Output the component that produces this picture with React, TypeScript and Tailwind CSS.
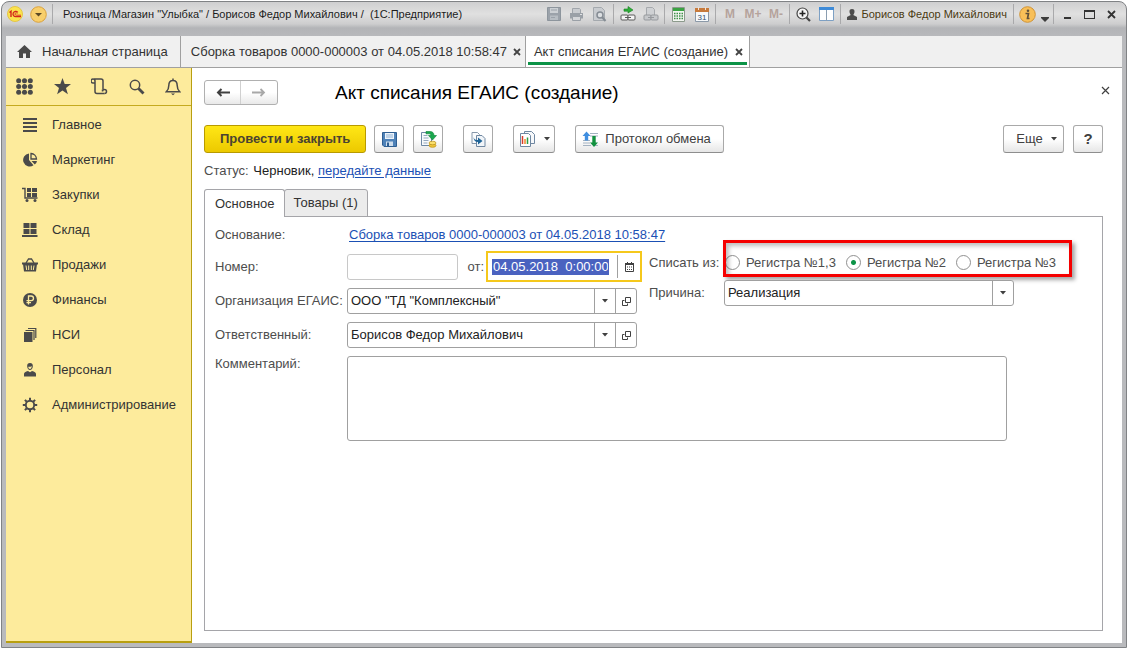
import { useState } from "react"
import type { ReactNode } from "react"
import clsx from "clsx"

const INK = "#4a4a4a"

/* ---------- small shared pieces ---------- */

function Caret({ className }: { className?: string }) {
  return (
    <svg width="6" height="4" viewBox="0 0 6 4" className={className} aria-hidden="true">
      <path d="M0 0h6L3 3.5z" fill="#404040" />
    </svg>
  )
}

function Sep() {
  return <span className="mx-[2px] h-5 w-px shrink-0 bg-[#a9a9ab]" />
}

function BarButton({ label, children }: { label: string; children: ReactNode }) {
  return (
    <button type="button" aria-label={label} className="flex h-6 w-[23px] shrink-0 items-center justify-center">
      {children}
    </button>
  )
}

const toolButton =
  "flex h-7 items-center justify-center rounded-[3px] border border-[#a9a9a9] border-b-[#8e8e8e] bg-linear-to-b from-white from-50% to-[#e6e6e6] text-[#404040]"

/* ---------- title bar ---------- */

function PrinterIcon() {
  return (
    <svg width="15" height="15" viewBox="0 0 15 15" aria-hidden="true">
      <path d="M3.500 1.500h7l1 1v4h-8z" fill="#c9ccd0" stroke="#a0a5ab" />
      <path d="M1 6h13v5.500H1z" fill="#9aa0a7" />
      <path d="M3.500 9.500h8v4h-8z" fill="#d4d6d9" stroke="#9aa0a7" />
      <path d="M11 7.500h2" stroke="#dfe1e3" />
    </svg>
  )
}

function TitleBar() {
  return (
    <header className="flex h-[34px] items-start text-[11px] text-[#1c1c1c]">
      <div className="flex h-6 min-w-0 flex-1 items-center">
        <svg width="16" height="16" viewBox="0 0 16 16" className="ml-px shrink-0" aria-hidden="true">
          <circle cx="8" cy="8" r="7.500" fill="#fbe34d" stroke="#e3c548" />
          <path d="M2.500 6.500l1.500-1.300v5.800" fill="none" stroke="#d3261c" strokeWidth="1.400" />
          <path d="M10.800 6.300a2.700 2.700 0 1 0-1.800 4.400h5" fill="none" stroke="#d3261c" strokeWidth="1.300" />
          <path d="M10.300 7.500a1.200 1.200 0 1 0-1 1.700h4.700" fill="none" stroke="#d3261c" strokeWidth="0.900" />
        </svg>
        <button type="button" aria-label="Главное меню" className="ml-[7px] shrink-0">
          <svg width="17" height="17" viewBox="0 0 17 17" aria-hidden="true">
            <circle cx="8.500" cy="8.500" r="7.800" fill="#f8cf6c" stroke="#d9a13d" />
            <path d="M5 7h7l-3.500 3.500z" fill="#5d4a25" />
          </svg>
        </button>
        <span className="mx-[5px] h-5 w-px shrink-0 bg-[#a9a9ab]" />
        <span className="ml-[5px] truncate whitespace-pre">
          Розница /Магазин "Улыбка" / Борисов Федор Михайлович /  (1С:Предприятие)
        </span>
      </div>

      <div className="flex h-6 shrink-0 items-center">
        <BarButton label="Сохранить">
          <svg width="14" height="14" viewBox="0 0 14 14" aria-hidden="true">
            <path d="M.5.5h13v13H.5z" fill="#9ba2aa" stroke="#8d959d" />
            <path d="M3 1h8v5H3z" fill="#ccd0d4" />
            <path d="M3 8.500h8V13H3z" fill="#b7bdc3" />
            <path d="M4 3h6M4 10.500h4" stroke="#9ba2aa" />
          </svg>
        </BarButton>
        <BarButton label="Печать">
          <PrinterIcon />
        </BarButton>
        <BarButton label="Предварительный просмотр">
          <svg width="15" height="15" viewBox="0 0 15 15" aria-hidden="true">
            <path d="M1.500.5h8l3 3v10h-11z" fill="#c9ccd0" stroke="#a4a9ae" />
            <circle cx="8" cy="8" r="3" fill="#dcdfe2" stroke="#858c94" strokeWidth="1.500" />
            <path d="M10 10l3.500 4" stroke="#858c94" strokeWidth="2" />
          </svg>
        </BarButton>
        <Sep />
        <BarButton label="Получить ссылку">
          <svg width="16" height="16" viewBox="0 0 16 16" aria-hidden="true">
            <path d="M4 3h4V.5L13 4 8 7V5.200H4z" fill="#2fae3b" stroke="#16801f" strokeWidth="0.600" />
            <rect x="1" y="9" width="7" height="5" rx="1" fill="#f4f4f4" stroke="#5a5a5a" />
            <rect x="8" y="9" width="7" height="5" rx="1" fill="#f4f4f4" stroke="#5a5a5a" />
            <path d="M5 11.500h6" stroke="#5a5a5a" />
          </svg>
        </BarButton>
        <BarButton label="Перейти по ссылке">
          <svg width="16" height="15" viewBox="0 0 16 15" aria-hidden="true">
            <path d="M3.500.5h6l2 2v6h-8z" fill="#cfd1d4" stroke="#a6a9ad" />
            <rect x="1" y="8" width="7" height="5" rx="1" fill="#c6c8cb" stroke="#96999d" />
            <rect x="8" y="8" width="7" height="5" rx="1" fill="#c6c8cb" stroke="#96999d" />
            <path d="M5 10.500h6" stroke="#96999d" />
          </svg>
        </BarButton>
        <Sep />
        <BarButton label="Калькулятор">
          <svg width="13" height="15" viewBox="0 0 13 15" aria-hidden="true">
            <path d="M.5.5h12v14H.5z" fill="#f3f6f1" stroke="#8c9a8c" />
            <path d="M1 1h11v3H1z" fill="#3aa342" />
            <path d="M2 6.500h9M2 9h9M2 11.500h9" stroke="#3f8f48" strokeWidth="1.500" strokeDasharray="1.500 1" />
          </svg>
        </BarButton>
        <BarButton label="Календарь">
          <svg width="14" height="15" viewBox="0 0 14 15" aria-hidden="true">
            <path d="M.5 1.500h13v13H.5z" fill="#f7f9fb" stroke="#8b99a8" />
            <path d="M0 1h14v4H0z" fill="#c77a3c" />
            <path d="M3.500 0v3M10.500 0v3" stroke="#f1e3d6" />
            <text x="7" y="12.500" textAnchor="middle" fontSize="8" fill="#34506e">31</text>
          </svg>
        </BarButton>
        <Sep />
        <button type="button" className="h-6 w-[23px] text-xs font-bold text-[#b5a39c]">M</button>
        <button type="button" className="h-6 w-[23px] text-xs font-bold text-[#b5a39c]">M+</button>
        <button type="button" className="h-6 w-[23px] text-xs font-bold text-[#b5a39c]">M-</button>
        <Sep />
        <BarButton label="Масштаб">
          <svg width="15" height="15" viewBox="0 0 15 15" aria-hidden="true">
            <circle cx="6.500" cy="6.500" r="5.500" fill="#f5f5f5" stroke="#454545" strokeWidth="1.200" />
            <path d="M3.500 6.500h6M6.500 3.500v6" stroke="#222" strokeWidth="1.600" />
            <path d="M10.500 10.500l3.500 3.500" stroke="#454545" strokeWidth="2.200" />
          </svg>
        </BarButton>
        <BarButton label="Панели">
          <svg width="15" height="14" viewBox="0 0 15 14" aria-hidden="true">
            <path d="M.5.5h14v13H.5z" fill="#fff" stroke="#7da0c4" />
            <path d="M0 0h15v3H0z" fill="#3f8bd8" />
            <path d="M7.500 3v11" stroke="#8a9db0" />
          </svg>
        </BarButton>
        <Sep />
        <button type="button" className="flex h-6 items-center gap-1 px-1 text-[#4a3a12]">
          <svg width="10" height="11" viewBox="0 0 10 11" aria-hidden="true">
            <path d="M5 0c2 0 2.700 1.300 2.500 3C7.300 4.500 6.600 5.200 6.300 6L10 8v3H0V8l3.700-2C3.400 5.200 2.700 4.500 2.500 3 2.300 1.300 3 0 5 0z" fill="#4d4d4d" />
          </svg>
          Борисов Федор Михайлович
        </button>
        <Sep />
        <BarButton label="О программе">
          <svg width="17" height="17" viewBox="0 0 17 17" aria-hidden="true">
            <circle cx="8.500" cy="8.500" r="7.800" fill="#f8bf58" stroke="#cf9336" />
            <circle cx="9" cy="4.700" r="1.300" fill="#5f503a" />
            <path d="M6.500 7.500h3l-1 5h2" fill="none" stroke="#5f503a" strokeWidth="1.700" />
          </svg>
        </BarButton>
        <button type="button" aria-label="Сервис" className="flex h-6 w-3 items-end justify-center pb-1">
          <svg width="8" height="5" viewBox="0 0 8 5" aria-hidden="true">
            <path d="M0 0h8v1L4 5 0 1z" fill="#3d3d3d" />
          </svg>
        </button>
        <Sep />
        <button type="button" aria-label="Свернуть" className="flex h-6 w-[22px] items-end justify-center pb-[7px]">
          <span className="h-[2px] w-[7px] bg-[#333]" />
        </button>
        <button type="button" aria-label="Развернуть" className="flex h-6 w-[22px] items-center justify-center">
          <span className="h-[9px] w-[11px] border border-t-2 border-[#333]" />
        </button>
        <button type="button" aria-label="Закрыть" className="flex h-6 w-[22px] items-center justify-center">
          <svg width="9" height="9" viewBox="0 0 9 9" aria-hidden="true">
            <path d="M1 1l7 7M8 1L1 8" stroke="#333" strokeWidth="1.800" />
          </svg>
        </button>
      </div>
    </header>
  )
}

/* ---------- open windows ---------- */

function CloseMark() {
  return (
    <svg width="8" height="8" viewBox="0 0 8 8" aria-hidden="true">
      <path d="M1 1l6 6M7 1L1 7" stroke="#444" strokeWidth="1.800" />
    </svg>
  )
}

function WindowTabs() {
  return (
    <nav className="flex h-8 border-b border-[#a0a0a0] bg-[#f0f0f0] text-[13px] text-[#333]">
      <button type="button" className="flex items-center gap-[10px] border-r border-[#a0a0a0] pr-3 pl-[11px]">
        <svg width="15" height="13" viewBox="0 0 15 13" aria-hidden="true">
          <path d="M7.500 0L15 7h-2v6H9V8.500H6V13H2V7H0z" fill={INK} />
        </svg>
        Начальная страница
      </button>
      <div className="flex items-center gap-[6px] border-r border-[#a0a0a0] pr-1 pl-[10px]">
        <button type="button">Сборка товаров 0000-000003 от 04.05.2018 10:58:47</button>
        <button type="button" aria-label="Закрыть вкладку"><CloseMark /></button>
      </div>
      <div className="flex border-r border-[#a0a0a0] bg-white px-[2px] pb-[2px]">
        <div className="flex items-center gap-[7px] border-b-3 border-[#0c9347] px-1 pt-[5px] pl-[6px]">
          <button type="button">Акт списания ЕГАИС (создание)</button>
          <button type="button" aria-label="Закрыть вкладку"><CloseMark /></button>
        </div>
      </div>
    </nav>
  )
}

/* ---------- sidebar ---------- */

const SECTIONS: { title: string; icon: ReactNode }[] = [
  { title: "Главное", icon: <path d="M1 2h14M1 6h14M1 10h14M1 14h14" stroke={INK} strokeWidth="2" /> },
  {
    title: "Маркетинг",
    icon: (
      <>
        <path d="M7 1.500V8l4.500 5.200A6.500 6.500 0 1 1 7 1.500z" fill={INK} />
        <path d="M9 1.500V7h5.500A5.800 5.800 0 0 0 9 1.500z" fill="none" stroke={INK} strokeWidth="1.300" />
        <path d="M9.500 9H15a6 6 0 0 1-2.200 3.500z" fill={INK} />
      </>
    ),
  },
  {
    title: "Закупки",
    icon: (
      <>
        <path d="M0 1.500h3v9.500h12.500" fill="none" stroke={INK} strokeWidth="1.400" />
        <path d="M5 1h4v4H5zM10 1h5v4h-5zM5 6h4v4H5zM10 6h5v4h-5z" fill={INK} />
        <circle cx="5" cy="13.500" r="1.500" fill={INK} />
        <circle cx="13" cy="13.500" r="1.500" fill={INK} />
      </>
    ),
  },
  {
    title: "Склад",
    icon: <path d="M1.500 1h6v5h-6zM8.500 1h6v5h-6zM1.500 7h6v5h-6zM8.500 7h6v5h-6zM0 13h15.500v2H0z" fill={INK} />,
  },
  {
    title: "Продажи",
    icon: (
      <>
        <path d="M4 6l2.500-4h3L12 6" fill="none" stroke={INK} strokeWidth="1.300" />
        <path d="M0 5.500h16v2H0zM1 7h14l-1 7.500H2z" fill={INK} />
        <path d="M4 8.500l.7 4.500M6.700 8.500V13M9.300 8.500V13M12 8.500l-.7 4.500" stroke="#fdeb9c" />
      </>
    ),
  },
  {
    title: "Финансы",
    icon: (
      <>
        <circle cx="8" cy="8" r="7" fill={INK} />
        <path d="M6.500 12.500V4h2.700a2.300 2.300 0 0 1 0 4.600H4.500M4.500 10.700H9" fill="none" stroke="#fdeb9c" strokeWidth="1.300" />
      </>
    ),
  },
  {
    title: "НСИ",
    icon: (
      <>
        <path d="M2 5h8.500v10H2z" fill={INK} />
        <path d="M3.500 3.500H12V13M6 1.500h7.800V11" fill="none" stroke={INK} strokeWidth="1.200" />
      </>
    ),
  },
  {
    title: "Персонал",
    icon: (
      <>
        <path d="M8 1c2.300 0 3 1.500 2.800 3.500C10.600 6.500 9.500 8 8 8S5.400 6.500 5.200 4.500C5 2.500 5.700 1 8 1z" fill={INK} />
        <path d="M2 14.500V12c0-1.500 1.500-2.500 4-3l2 1.300L10 9c2.500.5 4 1.500 4 3v2.500z" fill={INK} />
        <path d="M6.300 4.700c1.200.3 2.400.2 3.400-.7 0 1.700-.6 3-1.700 3s-1.700-1-1.700-2.300z" fill="#fdeb9c" />
      </>
    ),
  },
  {
    title: "Администрирование",
    icon: (
      <>
        <circle cx="8" cy="8" r="4.200" fill="none" stroke={INK} strokeWidth="1.900" />
        <path
          d="M8 .8v2.700M8 12.500v2.700M.8 8h2.700M12.500 8h2.700M2.900 2.900l1.900 1.900M11.200 11.200l1.900 1.900M13.100 2.900l-1.900 1.900M4.800 11.200l-1.900 1.900"
          stroke={INK}
          strokeWidth="2"
        />
      </>
    ),
  },
]

function Sidebar() {
  return (
    <aside className="flex w-[186px] shrink-0 flex-col border-r border-b-2 border-[#b89f10] bg-[#fdeb9c]">
      <div className="flex h-[38px] items-center justify-between border-b border-[#c5aa20] pr-[10px] pl-[10px]">
        <button type="button" aria-label="Меню функций">
          <svg width="17" height="17" viewBox="0 0 19 19" fill={INK} aria-hidden="true">
            {[3, 9.5, 16].map((cy) =>
              [3, 9.5, 16].map((cx) => <circle key={`${cx}-${cy}`} cx={cx} cy={cy} r="2.800" />)
            )}
          </svg>
        </button>
        <button type="button" aria-label="Избранное">
          <svg width="17" height="17" viewBox="0 0 17 17" aria-hidden="true">
            <path d="M8.500 0l2.200 6H17l-5 3.900 1.900 6.300-5.400-3.800-5.400 3.800L5 9.900 0 6h6.300z" fill={INK} />
          </svg>
        </button>
        <button type="button" aria-label="История">
          <svg width="17" height="17" viewBox="0 0 17 17" fill="none" stroke={INK} strokeWidth="1.500" aria-hidden="true">
            <path d="M4 5V3a2 2 0 1 0-2 2h2zM3 1h7a2 2 0 0 1 2 2v8.500M4 5v8.500a2 2 0 0 0 2 2h7.500" />
            <path d="M13.500 15.500a2 2 0 1 0-2-2v-2" />
          </svg>
        </button>
        <button type="button" aria-label="Поиск">
          <svg width="16" height="16" viewBox="0 0 16 16" aria-hidden="true">
            <circle cx="6" cy="6" r="4.700" fill="none" stroke={INK} strokeWidth="1.500" />
            <path d="M9.500 9.500l5 5" stroke={INK} strokeWidth="2.800" />
          </svg>
        </button>
        <button type="button" aria-label="Уведомления">
          <svg width="16" height="18" viewBox="0 0 16 18" fill="none" stroke={INK} strokeWidth="1.500" aria-hidden="true">
            <path d="M8 2.500c3 0 4.200 2.200 4.200 5 0 3.300.6 4.600 2.500 6.300H1.300c1.900-1.700 2.500-3 2.500-6.300 0-2.800 1.200-5 4.200-5zM8 .5v2" />
            <path d="M6 15.500h4L8 17.300z" fill={INK} stroke="none" />
          </svg>
        </button>
      </div>
      <ul className="pt-px text-[13px] text-[#333]">
        {SECTIONS.map((s) => (
          <li key={s.title}>
            <button type="button" className="flex h-[35px] w-full items-center gap-[14px] pl-4">
              <svg width="16" height="16" viewBox="0 0 16 16" aria-hidden="true">{s.icon}</svg>
              {s.title}
            </button>
          </li>
        ))}
      </ul>
    </aside>
  )
}

/* ---------- command bar ---------- */

function CommandBar() {
  return (
    <div className="flex items-center">
      <button
        type="button"
        className="h-7 rounded-[3px] border border-[#b89a00] bg-linear-to-b from-[#ffe715] to-[#ecc900] px-[15px] text-[13px] font-bold text-[#4a4331]"
      >
        Провести и закрыть
      </button>
      <button type="button" aria-label="Записать" className={clsx(toolButton, "ml-2 w-[30px]")}>
        <svg width="15" height="15" viewBox="0 0 15 15" aria-hidden="true">
          <path d="M.5.5h14v14H2l-1.500-1.500z" fill="#4f82b8" stroke="#2f5f92" />
          <path d="M3 1h9v6H3z" fill="#eef4fa" />
          <path d="M4 3h7M4 5h7" stroke="#8fb2d6" />
          <path d="M4 9.500h7V14H4z" fill="#cfdeed" />
          <path d="M5 10.500h2V14H5z" fill="#2f5f92" />
        </svg>
      </button>
      <button type="button" aria-label="Провести" className={clsx(toolButton, "ml-[9px] w-[30px]")}>
        <svg width="17" height="17" viewBox="0 0 17 17" aria-hidden="true">
          <path d="M1.500 1.500h10v13h-10z" fill="#f8fafc" stroke="#6d88a5" />
          <path d="M3.500 4.500h4M3.500 7h5M3.500 9.500h5M3.500 12h4" stroke="#93a8bf" />
          <path d="M6 .5h4c2.500 0 4 1.300 4 4h2.500l-4 4.500-4-4.500H11C11 3.400 10 2.800 8.500 2.800H6z" fill="#19a84e" stroke="#0d7f38" strokeWidth="0.600" />
          <ellipse cx="12.500" cy="14.500" rx="3.500" ry="1.800" fill="#f0c63a" stroke="#b98d12" strokeWidth="0.700" />
          <ellipse cx="12.500" cy="12" rx="3.500" ry="1.800" fill="#fadf6e" stroke="#b98d12" strokeWidth="0.700" />
        </svg>
      </button>
      <button type="button" aria-label="Создать на основании" className={clsx(toolButton, "ml-5 w-[30px]")}>
        <svg width="15" height="15" viewBox="0 0 15 15" aria-hidden="true">
          <path d="M1 .5h5.500l2 2v9H1z" fill="#fbfcfd" stroke="#8798ab" />
          <path d="M5.500 3.500h5.500l3 3v8H5.500z" fill="#f1f5f9" stroke="#6f87a1" />
          <path d="M2.500 5c.5 2.500 2 3 4.500 3V5.500L11.500 9 7 12.500V10C4 10 2.500 8 2.500 5z" fill="#1f6497" />
        </svg>
      </button>
      <button type="button" aria-label="Отчеты" className={clsx(toolButton, "ml-5 w-[42px] gap-2")}>
        <svg width="17" height="16" viewBox="0 0 17 16" aria-hidden="true">
          <path d="M5.500.5h7l3 3v9h-10z" fill="#f7f9fb" stroke="#6f87a1" />
          <path d="M1.500 2.500h8l2 2v11h-10z" fill="#fff" stroke="#6f87a1" />
          <path d="M3.500 5v8" stroke="#d93d2c" strokeWidth="1.500" />
          <path d="M6 8v5" stroke="#f0892a" strokeWidth="1.500" />
          <path d="M8.500 6.500V13" stroke="#2b9d42" strokeWidth="1.500" />
        </svg>
        <Caret />
      </button>
      <button type="button" className={clsx(toolButton, "ml-5 gap-[6px] pr-3 pl-[6px] text-[13px]")}>
        <svg width="17" height="17" viewBox="0 0 17 17" aria-hidden="true">
          <path d="M8 2.500h8M8 5h8M1 9.500h7M1 12h7M1 14.500h8M13 14.500h3" stroke="#a4b2c1" />
          <path d="M4.500.5l4 4.500H6.200v4.500H2.800V5H.5z" fill="#3f8ee0" />
          <path d="M12 16l-4-4.500h2.300V5h3.400v6.500H16z" fill="#12913f" />
        </svg>
        Протокол обмена
      </button>
      <button type="button" className={clsx(toolButton, "ml-auto w-[61px] gap-[8px] pl-[6px] text-[13px]")}>
        Еще
        <Caret />
      </button>
      <button type="button" aria-label="Справка" className={clsx(toolButton, "ml-[9px] w-[30px] text-[15px] font-bold")}>
        ?
      </button>
    </div>
  )
}

/* ---------- form ---------- */

function LookupField({ id, label, value }: { id: string; label: string; value: string }) {
  const [text, setText] = useState(value)
  return (
    <div className="mt-2 flex h-[26px] items-center first:mt-0">
      <label htmlFor={id} className="w-[132px] shrink-0 whitespace-nowrap">{label}</label>
      <div className="flex h-full w-[290px] rounded-[3px] border border-[#a0a0a0] bg-white">
        <input
          id={id}
          type="text"
          value={text}
          onChange={(e) => setText(e.target.value)}
          className="min-w-0 flex-1 px-[3px] text-[#222] outline-none"
        />
        <button type="button" aria-label="Выбрать" className="flex w-[21px] items-center justify-center border-l border-[#a0a0a0]">
          <Caret />
        </button>
        <button type="button" aria-label="Открыть" className="flex w-[21px] items-center justify-center border-l border-[#a0a0a0]">
          <svg width="9" height="9" viewBox="0 0 9 9" fill="none" stroke="#404040" aria-hidden="true">
            <path d="M3.500.5h5v5h-5z" />
            <path d="M2.500 3.500h-2v5h5v-2" />
          </svg>
        </button>
      </div>
    </div>
  )
}

const REGISTERS = ["Регистра №1,3", "Регистра №2", "Регистра №3"]

function FormPanel() {
  const [date, setDate] = useState("04.05.2018  0:00:00")
  const [register, setRegister] = useState(REGISTERS[1])
  const [comment, setComment] = useState("")

  return (
    <div className="flex-1 border border-[#a5a5a9] bg-white pt-2 pl-[10px] text-[13px] text-[#4d4d4d]">
      <div className="flex gap-[7px]">
        <div className="w-[427px] shrink-0">
          <div className="flex h-5 items-center whitespace-nowrap">
            <span className="w-[134px] shrink-0">Основание:</span>
            <a href="#basis" className="text-[#1b50b4] underline underline-offset-2">
              Сборка товаров 0000-000003 от 04.05.2018 10:58:47
            </a>
          </div>

          <div className="my-[6px] flex h-[31px] items-center">
            <label htmlFor="number" className="w-[132px] shrink-0">Номер:</label>
            <input id="number" type="text" className="h-[26px] w-[111px] rounded-[3px] border border-[#c8c8c8] bg-white px-1 outline-none" />
            <label htmlFor="date" className="ml-auto pr-[2px]">от:</label>
            <div className="flex h-full w-[156px] items-center border-2 border-[#f5c81c] bg-white pl-1">
              <input
                id="date"
                type="text"
                value={date}
                onChange={(e) => setDate(e.target.value)}
                className="h-4 w-[117px] bg-[#4a62c0] px-px text-white outline-none"
              />
              <span className="ml-auto h-[23px] w-px bg-[#a0a0a0]" />
              <button type="button" aria-label="Открыть календарь" className="flex w-[22px] justify-center">
                <svg width="9" height="10" viewBox="0 0 9 10" aria-hidden="true">
                  <path d="M.5 1.500h8v8h-8z" fill="#fff" stroke="#404040" />
                  <path d="M0 1h9v2H0zM2 0h1v1H2zM6 0h1v1H6z" fill="#404040" />
                  <path d="M2 5h5M2 7.500h5" stroke="#404040" strokeDasharray="1 1" />
                </svg>
              </button>
            </div>
          </div>

          <div>
            <LookupField id="org" label="Организация ЕГАИС:" value={'ООО "ТД "Комплексный"'} />
            <LookupField id="person" label="Ответственный:" value="Борисов Федор Михайлович" />
          </div>
        </div>

        <div className="flex min-w-0 flex-1 flex-col gap-[3px] pt-[15px]">
          <div role="radiogroup" aria-labelledby="registers-label" className="flex h-[37px]">
            <span id="registers-label" className="flex w-[74px] shrink-0 items-center pt-[8px] whitespace-nowrap">
              Списать из:
            </span>
            <div className="relative flex items-center gap-[10px] pt-[8px] pr-4 pl-[2px]">
              {REGISTERS.map((r) => (
                <label key={r} className="flex items-center gap-[6px] whitespace-nowrap">
                  <input
                    type="radio"
                    name="register"
                    checked={register === r}
                    onChange={() => setRegister(r)}
                    className="size-[15px] appearance-none rounded-full border border-[#909090] bg-white checked:bg-[radial-gradient(circle,#0c9347_2px,#fff_3px)]"
                  />
                  {r}
                </label>
              ))}
              <span className="pointer-events-none absolute inset-0 border-3 border-[#f50000] shadow-[3px_3px_4px_rgba(0,0,0,0.35),inset_3px_3px_4px_rgba(0,0,0,0.25)]" />
            </div>
          </div>
          <div className="flex h-[26px] items-center">
            <label htmlFor="reason" className="w-[75px] shrink-0">Причина:</label>
            <div className="relative h-full w-[290px]">
              <select id="reason" className="h-full w-full appearance-none rounded-[3px] border border-[#a0a0a0] bg-white px-[3px] text-[#222] outline-none">
                <option>Реализация</option>
              </select>
              <span className="pointer-events-none absolute inset-y-px right-px flex w-[21px] items-center justify-center border-l border-[#a0a0a0]">
                <Caret />
              </span>
            </div>
          </div>
        </div>
      </div>

      <div className="mt-2 flex items-start">
        <label htmlFor="comment" className="w-[132px] shrink-0 leading-4">Комментарий:</label>
        <textarea
          id="comment"
          value={comment}
          onChange={(e) => setComment(e.target.value)}
          className="h-[85px] w-[660px] resize-none rounded-[3px] border border-[#a0a0a0] bg-white p-1 outline-none"
        />
      </div>
    </div>
  )
}

export default function App() {
  return (
    <div className="flex min-h-screen bg-white p-px font-['Liberation_Sans',sans-serif]">
      <div className="flex flex-1 flex-col rounded-t-lg border border-[#808285] bg-[linear-gradient(#cfcfd0,#e0e0e0_12px,#cdcdce_22px,#b3b4b7_26px,#b9babd_36px)] px-1 pb-1">
        <TitleBar />
        <WindowTabs />
        <div className="flex flex-1 bg-white">
          <Sidebar />
          <main className="flex min-w-0 flex-1 flex-col pt-3 pr-[19px] pb-3 pl-3">
            <div className="flex items-center">
              <div className="flex h-[25px] rounded-[3px] border border-[#b0b0b0] bg-linear-to-b from-white from-50% to-[#e9e9e9]">
                <button type="button" aria-label="Назад" className="flex w-9 items-center justify-center border-r border-[#d0d0d0]">
                  <svg width="14" height="9" viewBox="0 0 14 9" aria-hidden="true">
                    <path d="M14 4.500H2M5.500 1L2 4.500 5.500 8" fill="none" stroke="#404040" strokeWidth="2" />
                  </svg>
                </button>
                <button type="button" aria-label="Вперед" className="flex w-9 items-center justify-center">
                  <svg width="14" height="9" viewBox="0 0 14 9" aria-hidden="true">
                    <path d="M0 4.500h12M8.500 1L12 4.500 8.500 8" fill="none" stroke="#a8a8a8" strokeWidth="1.800" />
                  </svg>
                </button>
              </div>
              <h1 className="ml-[57px] text-[19px] leading-6 text-black">Акт списания ЕГАИС (создание)</h1>
              <button type="button" aria-label="Закрыть" className="-mr-2 mb-1 ml-auto p-[1px]">
                <svg width="9" height="9" viewBox="0 0 9 9" aria-hidden="true">
                  <path d="M1 1l7 7M8 1L1 8" stroke="#404040" strokeWidth="1.200" />
                </svg>
              </button>
            </div>
            <div className="mt-5">
              <CommandBar />
            </div>
            <p className="mt-2 text-[13px] leading-5 text-[#4d4d4d]">
              Статус: <span className="ml-px text-[#222]">Черновик,</span>{" "}
              <a href="#send" className="text-[#1b50b4] underline underline-offset-2">передайте данные</a>
            </p>
            <div role="tablist" className="mt-2 -mb-px flex items-end text-[13px] text-[#333]">
              <button type="button" role="tab" aria-selected="true" className="z-10 h-7 rounded-t-[3px] border border-b-0 border-[#a5a5a9] bg-white pr-[9px] pl-[10px]">
                Основное
              </button>
              <button type="button" role="tab" aria-selected="false" className="-ml-px h-7 rounded-t-[3px] border border-[#a5a5a9] bg-[#ececec] px-[9px]">
                Товары (1)
              </button>
            </div>
            <FormPanel />
          </main>
        </div>
      </div>
    </div>
  )
}
